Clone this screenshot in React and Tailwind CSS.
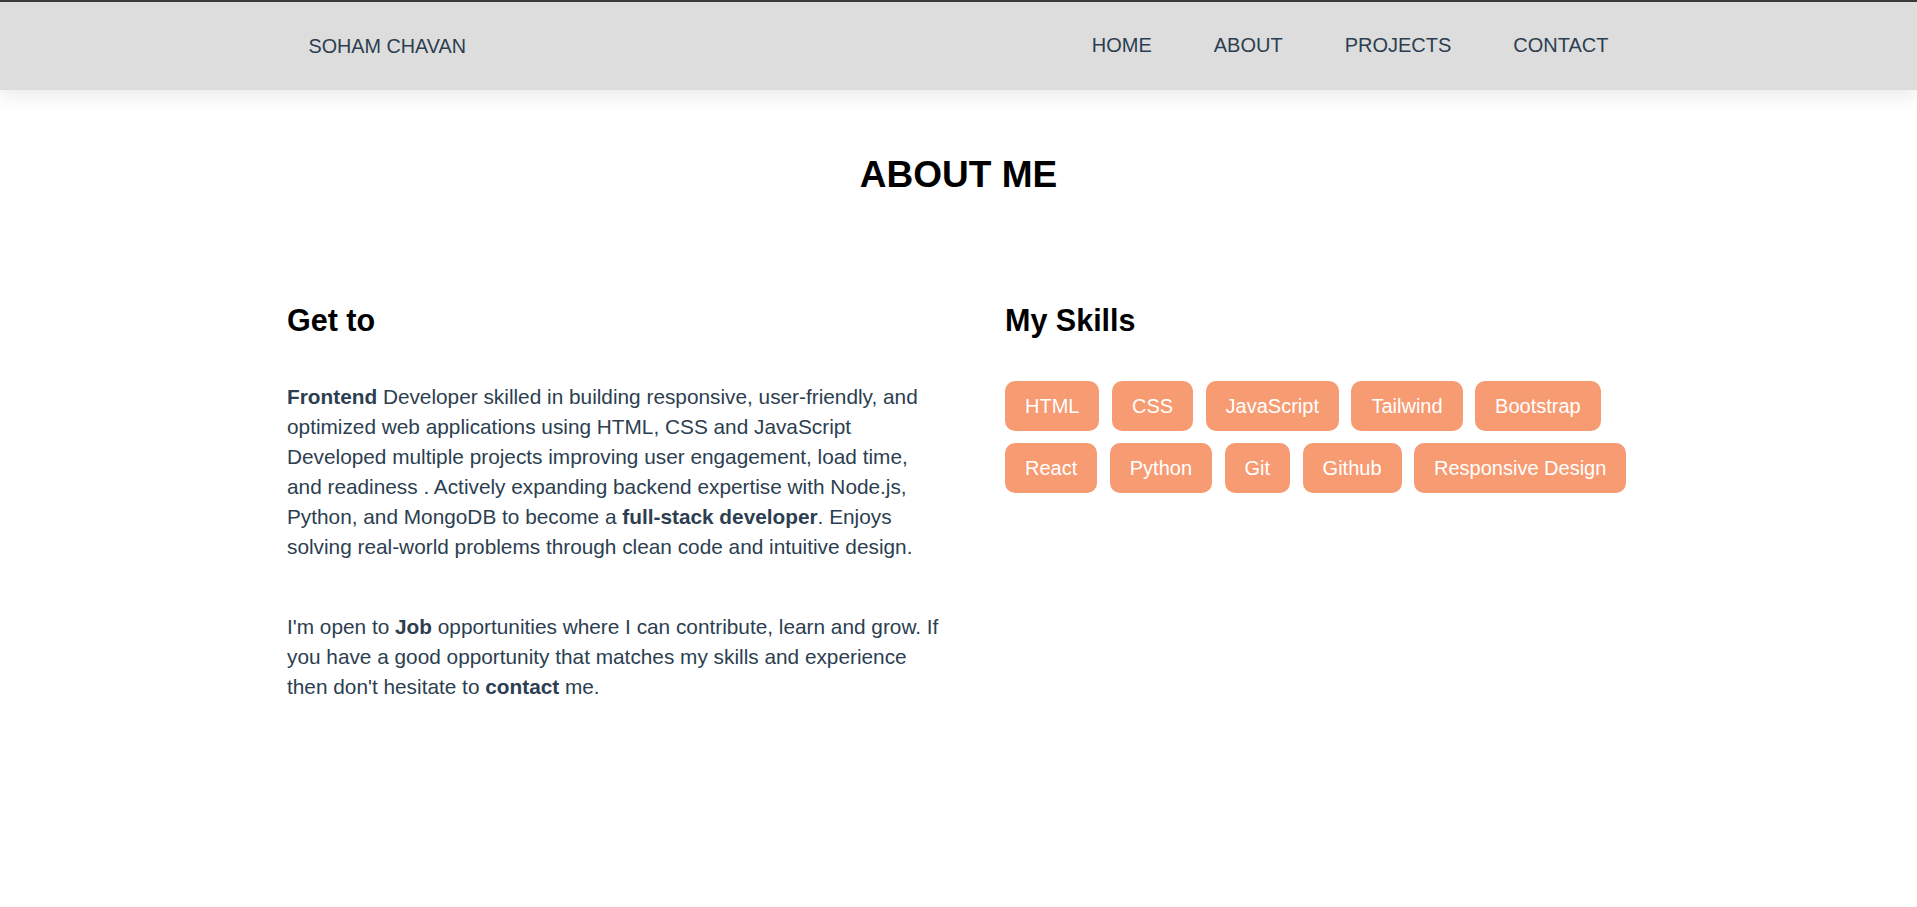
const NAV_LINKS = ['HOME', 'ABOUT', 'PROJECTS', 'CONTACT']

const SKILLS = [
  ['HTML', 'CSS', 'JavaScript', 'Tailwind', 'Bootstrap'],
  ['React', 'Python', 'Git', 'Github', 'Responsive Design'],
]

function Navbar() {
  return (
    <nav className="relative z-10 h-[90px] border-t-2 border-[#3a3a3a] bg-[#dddddd] shadow-[0_4px_20px_rgba(0,0,0,0.1)]">
      <div className="mx-auto flex h-full w-[1300px] items-center justify-between">
        <a href="#" className="text-[19.8px] leading-[normal] text-[#2c3e50]">SOHAM CHAVAN</a>
        <ul className="flex items-center gap-[62px]">
          {NAV_LINKS.map(link => (
            <li key={link}>
              <a href="#" className="text-[20px] leading-[normal] text-[#2c3e50]">{link}</a>
            </li>
          ))}
        </ul>
      </div>
    </nav>
  )
}

function SkillPill({ label }) {
  return (
    <span className="flex h-[50px] items-center rounded-[10px] bg-[#f79b73] px-5 text-[20px] leading-[normal] text-white">
      {label}
    </span>
  )
}

export default function App() {
  return (
    <div className="min-h-screen bg-white font-['Liberation_Sans',Arial,sans-serif]">
      <Navbar />

      <main className="pt-[64px]">
        {/* Title */}
        <h1 className="text-center text-[37px] font-bold leading-[normal] text-black">ABOUT ME</h1>

        <div className="mx-auto mt-[107px] flex w-[1343px] gap-[62px]">
          {/* About text */}
          <div className="w-[656px]">
            <h2 className="text-[30.5px] font-bold leading-[normal] text-black">Get to</h2>
            <p className="mt-[44px] text-[20.8px] leading-[30px] text-[#2c3e50]">
              <b>Frontend</b> Developer skilled in building responsive, user-friendly, and optimized web applications using HTML, CSS and JavaScript Developed multiple projects improving user engagement, load time, and readiness . Actively expanding backend expertise with Node.js, Python, and MongoDB to become a <b>full-stack developer</b>. Enjoys solving real-world problems through clean code and intuitive design.
            </p>
            <p className="mt-[50px] text-[20.8px] leading-[30px] text-[#2c3e50]">
              I'm open to <b>Job</b> opportunities where I can contribute, learn and grow. If you have a good opportunity that matches my skills and experience then don't hesitate to <b>contact</b> me.
            </p>
          </div>

          {/* Skills */}
          <div className="flex-1">
            <h2 className="text-[30.5px] font-bold leading-[normal] text-black">My Skills</h2>
            <div className="mt-[43px] flex flex-col gap-3">
              {SKILLS.map((row, i) => (
                <div key={i} className="flex gap-[12.5px]">
                  {row.map(skill => (
                    <SkillPill key={skill} label={skill} />
                  ))}
                </div>
              ))}
            </div>
          </div>
        </div>
      </main>
    </div>
  )
}
